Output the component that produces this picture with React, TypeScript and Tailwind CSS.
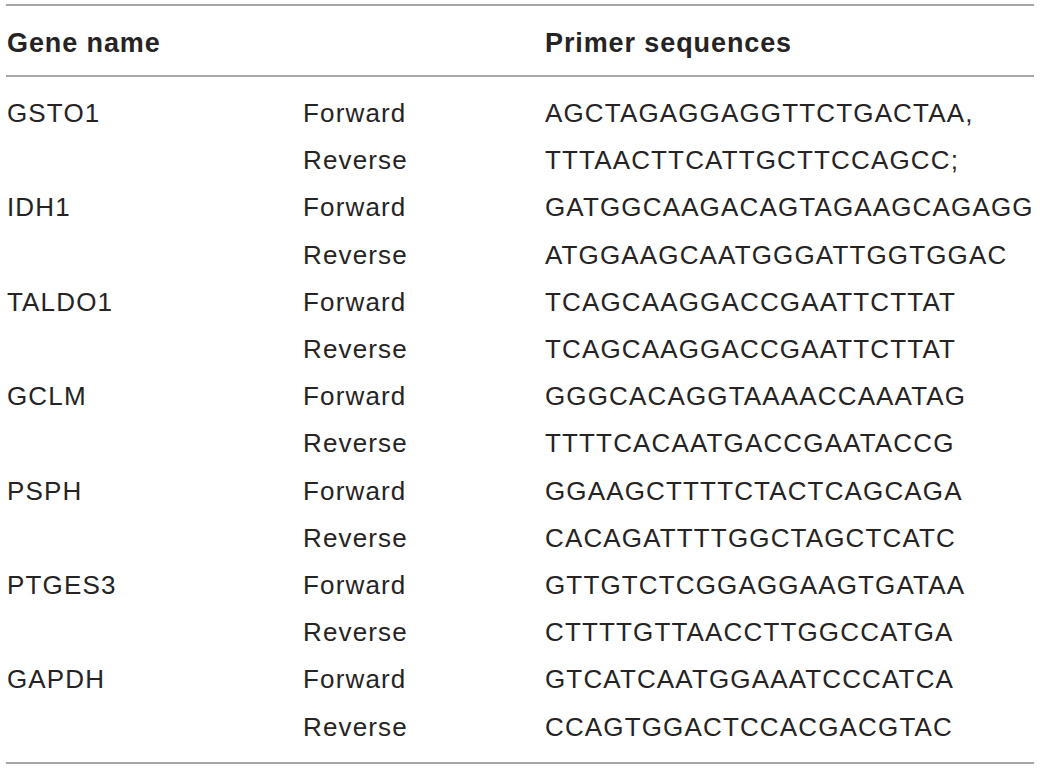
const primers = [
  { gene: 'GSTO1', forward: 'AGCTAGAGGAGGTTCTGACTAA,', reverse: 'TTTAACTTCATTGCTTCCAGCC;' },
  { gene: 'IDH1', forward: 'GATGGCAAGACAGTAGAAGCAGAGG', reverse: 'ATGGAAGCAATGGGATTGGTGGAC' },
  { gene: 'TALDO1', forward: 'TCAGCAAGGACCGAATTCTTAT', reverse: 'TCAGCAAGGACCGAATTCTTAT' },
  { gene: 'GCLM', forward: 'GGGCACAGGTAAAACCAAATAG', reverse: 'TTTTCACAATGACCGAATACCG' },
  { gene: 'PSPH', forward: 'GGAAGCTTTTCTACTCAGCAGA', reverse: 'CACAGATTTTGGCTAGCTCATC' },
  { gene: 'PTGES3', forward: 'GTTGTCTCGGAGGAAGTGATAA', reverse: 'CTTTTGTTAACCTTGGCCATGA' },
  { gene: 'GAPDH', forward: 'GTCATCAATGGAAATCCCATCA', reverse: 'CCAGTGGACTCCACGACGTAC' },
];

function Row({ gene, dir, seq }: { gene: string; dir: string; seq: string }) {
  return (
    <div className="grid grid-cols-[296px_242px_1fr] leading-[47.2px]">
      <div>{gene}</div>
      <div>{dir}</div>
      <div>{seq}</div>
    </div>
  );
}

export default function App() {
  return (
    <div className="min-h-[769px] w-[1040px] bg-white px-[6px] pt-[4px] font-['Liberation_Sans',Arial,sans-serif] text-[#262324]">
      <div className="border-y-2 border-[#a8a8a8]">
        {/* Header */}
        <div className="grid h-[71px] grid-cols-[296px_242px_1fr] items-center border-b-2 border-[#a8a8a8] pl-px pt-[5px] text-[27px] font-bold tracking-[0.9px]">
          <div>Gene name</div>
          <div />
          <div>Primer sequences</div>
        </div>

        {/* Body */}
        <div className="pl-px pb-[11px] pt-[13px] text-[26px] tracking-[1.15px]">
          {primers.map((p) => (
            <div key={p.gene}>
              <Row gene={p.gene} dir="Forward" seq={p.forward} />
              <Row gene="" dir="Reverse" seq={p.reverse} />
            </div>
          ))}
        </div>
      </div>
    </div>
  );
}
